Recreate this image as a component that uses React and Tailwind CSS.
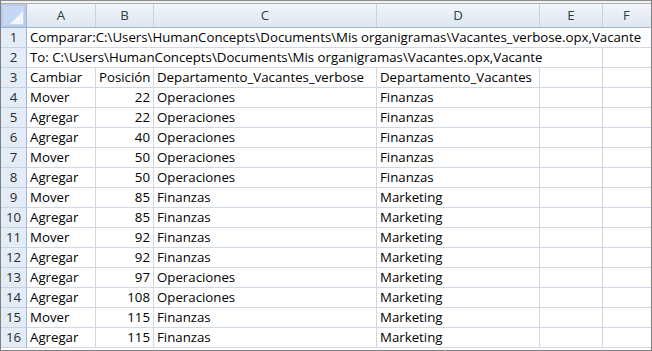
const cols = ['A', 'B', 'C', 'D', 'E', 'F']
const widths = ['w-[69px]', 'w-[58px]', 'w-[223px]', 'w-[163px]', 'w-[63px]', 'w-[47px]']

const rows = [
  ['Mover', 22, 'Operaciones', 'Finanzas'],
  ['Agregar', 22, 'Operaciones', 'Finanzas'],
  ['Agregar', 40, 'Operaciones', 'Finanzas'],
  ['Mover', 50, 'Operaciones', 'Finanzas'],
  ['Agregar', 50, 'Operaciones', 'Finanzas'],
  ['Mover', 85, 'Finanzas', 'Marketing'],
  ['Agregar', 85, 'Finanzas', 'Marketing'],
  ['Mover', 92, 'Finanzas', 'Marketing'],
  ['Agregar', 92, 'Finanzas', 'Marketing'],
  ['Agregar', 97, 'Operaciones', 'Marketing'],
  ['Agregar', 108, 'Operaciones', 'Marketing'],
  ['Mover', 115, 'Finanzas', 'Marketing'],
  ['Agregar', 115, 'Finanzas', 'Marketing'],
]

function RowHead({ n }) {
  return (
    <div className="w-[26px] shrink-0 h-full flex items-center justify-center bg-[#e4ecf7] border-r border-b border-[#9eb6ce] text-[#2a2a2a] border-b-[#c5d3e2]">
      {n}
    </div>
  )
}

function Cell({ w, children, right, last }) {
  return (
    <div
      className={`${w} shrink-0 h-full border-b border-[#d0d7e5] ${last ? '' : 'border-r'} px-[3px] flex items-center whitespace-nowrap overflow-hidden ${right ? 'justify-end' : ''}`}
    >
      {children}
    </div>
  )
}

export default function App() {
  return (
    <div className="w-[652px] h-[351px] bg-white overflow-hidden font-['Open_Sans',sans-serif] text-[13.25px] text-black border border-[#808080] border-t-0">
      <div className="h-[1px] bg-[#8c8c8c]" />
      <div className="h-[2px] bg-[#f2f2f2]" />
      <div className="h-[1px] bg-[#b0b0b0]" />

      {/* column headers */}
      <div className="flex h-[24px] bg-gradient-to-b from-[#f3f6fb] to-[#dde6f1] border-b border-[#9eb6ce]">
        <div className="w-[26px] shrink-0 h-full bg-[#b8cdea] border-r border-[#9eb6ce] relative">
          <div className="absolute inset-[2px] bg-[#c6d8f1]" />
          <div
            className="absolute right-[3px] bottom-[3px] w-[13px] h-[13px] bg-[#f2f5fa]"
            style={{ clipPath: 'polygon(100% 0, 100% 100%, 0 100%)' }}
          />
        </div>
        {cols.map((c, i) => (
          <div
            key={c}
            className={`${widths[i]} shrink-0 h-full flex items-center justify-center text-[#27413e] ${i < 5 ? 'border-r border-[#c5d3e2]' : ''}`}
          >
            {c}
          </div>
        ))}
      </div>

      <div className="flex h-[20px]">
        <RowHead n={1} />
        <div className="flex-1 h-full border-b border-[#d0d7e5] px-[3px] flex items-center whitespace-nowrap overflow-hidden">
          Comparar:C:\Users\HumanConcepts\Documents\Mis organigramas\Vacantes_verbose.opx,Vacante
        </div>
      </div>

      <div className="flex h-[20px]">
        <RowHead n={2} />
        <div className="w-[576px] shrink-0 h-full border-b border-r border-[#d0d7e5] px-[3px] flex items-center whitespace-nowrap">
          To: C:\Users\HumanConcepts\Documents\Mis organigramas\Vacantes.opx,Vacante
        </div>
        <Cell w="flex-1" last />
      </div>

      <div className="flex h-[20px]">
        <RowHead n={3} />
        <Cell w={widths[0]}>Cambiar</Cell>
        <Cell w={widths[1]}>Posición</Cell>
        <Cell w={widths[2]}>Departamento_Vacantes_verbose</Cell>
        <Cell w={widths[3]}>Departamento_Vacantes</Cell>
        <Cell w={widths[4]} />
        <Cell w="flex-1" last />
      </div>

      {rows.map((r, i) => (
        <div key={i} className="flex h-[20px]">
          <RowHead n={i + 4} />
          <Cell w={widths[0]}>{r[0]}</Cell>
          <Cell w={widths[1]} right>{r[1]}</Cell>
          <Cell w={widths[2]}>{r[2]}</Cell>
          <Cell w={widths[3]}>{r[3]}</Cell>
          <Cell w={widths[4]} />
          <Cell w="flex-1" last />
        </div>
      ))}
    </div>
  )
}
